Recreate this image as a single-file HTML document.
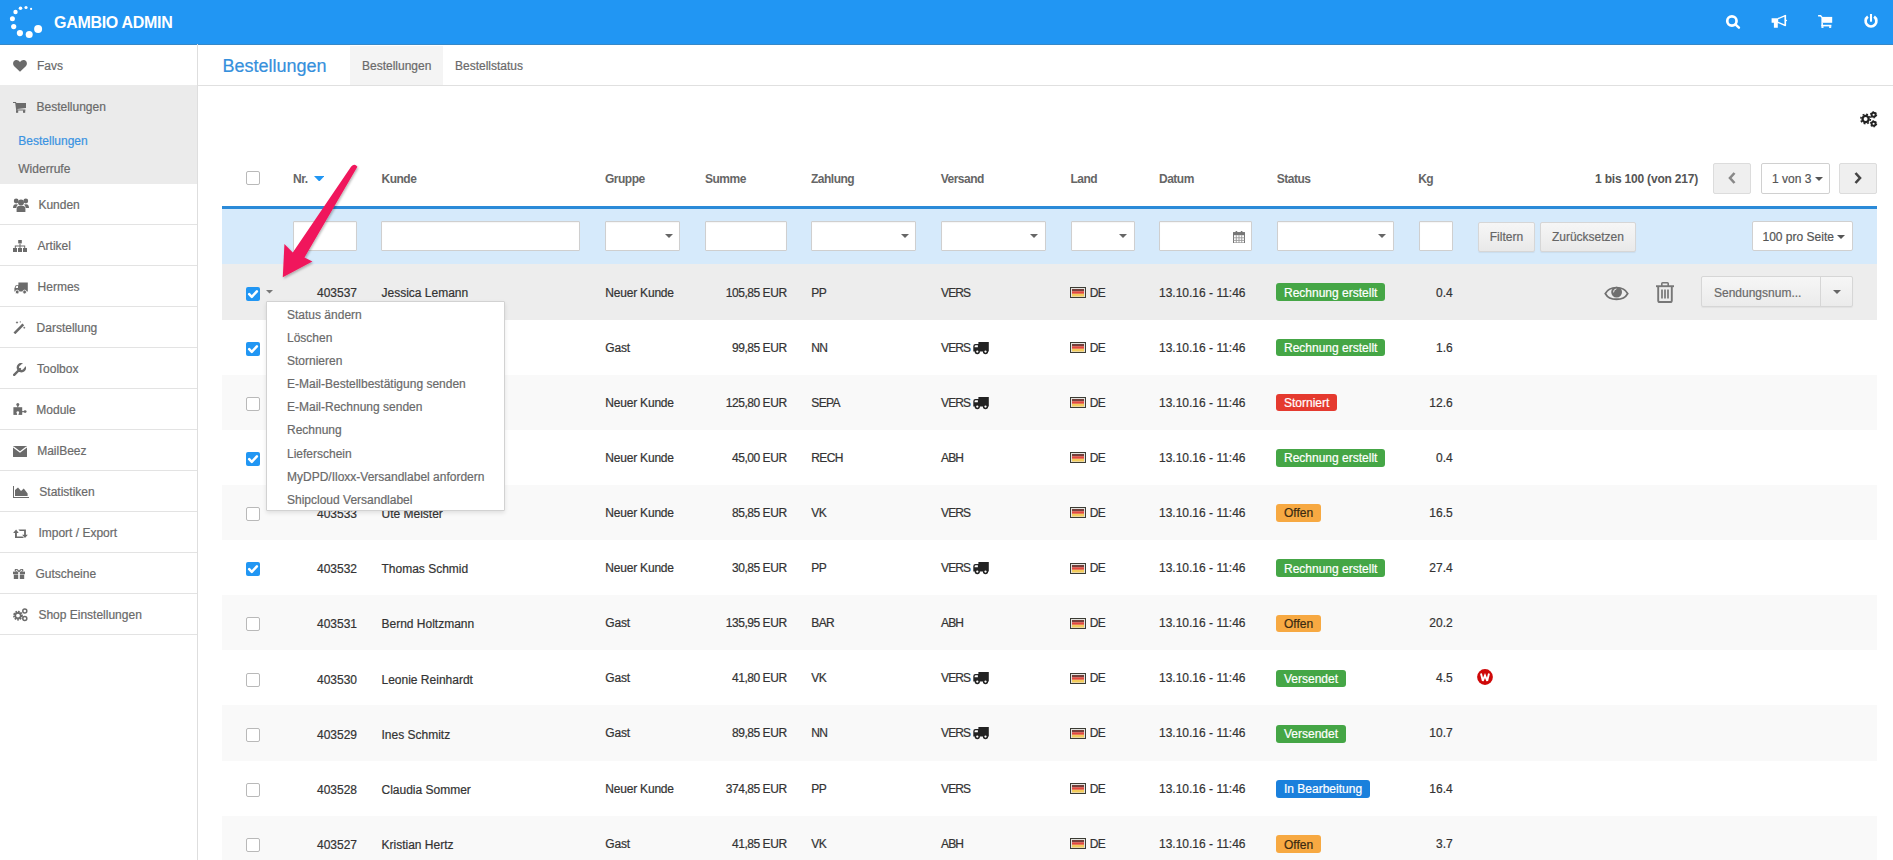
<!DOCTYPE html>
<html><head><meta charset="utf-8"><style>
html,body{margin:0;padding:0;width:1893px;height:860px;overflow:hidden;background:#fff;}
body{position:relative;font-family:"Liberation Sans", sans-serif;}
.t{position:absolute;white-space:nowrap;-webkit-text-stroke:0.2px currentColor;}
</style></head><body>
<div style="position:absolute;left:0.00px;top:0.00px;width:1893.00px;height:44.00px;background:#2196f3;"></div>
<div style="position:absolute;left:0.00px;top:44.00px;width:1893.00px;height:1.00px;background:#3688c8;"></div>
<svg style="position:absolute;left:0.00px;top:0.00px;" width="50" height="44" viewBox="0 0 50 44"><circle cx="31.1" cy="8.9" r="1.1" fill="#fff"/><circle cx="26" cy="7.5" r="1.6" fill="#fff"/><circle cx="20.5" cy="8.2" r="1.8" fill="#fff"/><circle cx="15.5" cy="12" r="2.2" fill="#fff"/><circle cx="12.4" cy="18.7" r="2.5" fill="#fff"/><circle cx="13.7" cy="26.6" r="2.6" fill="#fff"/><circle cx="19.9" cy="33.1" r="3.1" fill="#fff"/><circle cx="29.2" cy="34.4" r="3.5" fill="#fff"/><circle cx="38.1" cy="28.9" r="4" fill="#fff"/></svg>
<div class="t" style="left:54.00px;top:14.86px;font-size:16px;line-height:16px;font-weight:700;color:#fff;-webkit-text-stroke:0;letter-spacing:-0.3px;">GAMBIO ADMIN</div>
<svg style="position:absolute;left:1720.00px;top:10.00px;" width="26" height="22" viewBox="0 0 26 22"><circle cx="11.9" cy="11" r="4.65" fill="none" stroke="#fff" stroke-width="2.7"/><line x1="15.4" y1="14.4" x2="18.9" y2="17.7" stroke="#fff" stroke-width="2.5" stroke-linecap="round"/></svg>
<svg style="position:absolute;left:1766.00px;top:10.00px;" width="26" height="22" viewBox="0 0 26 22"><path d="M5.6 8.2 H12.2 V12.8 H11.8 V17.7 H7.9 V12.8 H5.6 Z" fill="#fff"/><path d="M12 8.7 L19.3 5.6 V15.5 L12 12.3" fill="none" stroke="#fff" stroke-width="1.4" stroke-linejoin="round"/><rect x="18.7" y="5" width="1.4" height="11" rx="0.6" fill="#fff"/><circle cx="20.3" cy="10.5" r="0.8" fill="#fff"/></svg>
<svg style="position:absolute;left:1814.00px;top:10.00px;" width="26" height="22" viewBox="0 0 26 22"><path d="M4.1 5.7 H6.6 L7.9 7.4" fill="none" stroke="#fff" stroke-width="1.5"/><rect x="7.4" y="6.9" width="10.8" height="5.9" fill="#fff"/><rect x="7.4" y="12.6" width="1.5" height="3.6" fill="#fff"/><rect x="7.4" y="14.8" width="10" height="1.6" fill="#fff"/><rect x="7.4" y="16.2" width="2.1" height="1.7" fill="#fff"/><rect x="15.1" y="16.2" width="2.1" height="1.7" fill="#fff"/></svg>
<svg style="position:absolute;left:1858.00px;top:8.00px;" width="26" height="24" viewBox="0 0 26 24"><path d="M16.1 8.68 A5.4 5.4 0 1 1 9.9 8.68" fill="none" stroke="#fff" stroke-width="2.7"/><line x1="13" y1="6" x2="13" y2="13.7" stroke="#fff" stroke-width="2.1"/></svg>
<div style="position:absolute;left:197.00px;top:44.00px;width:1.00px;height:816.00px;background:#dedede;"></div>
<div style="position:absolute;left:0.00px;top:84.50px;width:197.00px;height:1.00px;background:#e3e3e3;"></div>
<div class="t" style="left:37.00px;top:60.04px;font-size:12px;line-height:12px;font-weight:400;color:#6a6a6a;">Favs</div>
<svg style="position:absolute;left:13.00px;top:60.00px;" width="14" height="12" viewBox="0 0 14 12"><path d="M7 11.8 L1.2 6.2 C-0.6 4.3 -0.2 1.2 2.2 0.3 C4 -0.3 5.8 0.4 7 2.1 C8.2 0.4 10 -0.3 11.8 0.3 C14.2 1.2 14.6 4.3 12.8 6.2 Z" fill="#6b6b6b"/></svg>
<div style="position:absolute;left:0.00px;top:85.00px;width:197.00px;height:99.00px;background:#ebebeb;"></div>
<div class="t" style="left:36.50px;top:101.24px;font-size:12px;line-height:12px;font-weight:400;color:#6a6a6a;">Bestellungen</div>
<svg style="position:absolute;left:13.00px;top:102.00px;" width="13" height="11" viewBox="0 0 13 11"><path d="M0 0 H3 L3.3 1 H13 V6 L4.4 6.9 L4.6 7.6 H12.4 V8.4 H3.2 L2.2 1.1 H0 Z" fill="#6b6b6b"/><rect x="3" y="8.2" width="2.2" height="2.6" fill="#6b6b6b"/><rect x="10" y="8.2" width="2.2" height="2.6" fill="#6b6b6b"/></svg>
<div class="t" style="left:18.30px;top:134.84px;font-size:12px;line-height:12px;font-weight:400;color:#3a93e2;">Bestellungen</div>
<div class="t" style="left:18.30px;top:163.24px;font-size:12px;line-height:12px;font-weight:400;color:#6a6a6a;">Widerrufe</div>
<div class="t" style="left:38.40px;top:199.44px;font-size:12px;line-height:12px;font-weight:400;color:#6a6a6a;">Kunden</div>
<div style="position:absolute;left:0.00px;top:223.50px;width:197.00px;height:1.00px;background:#e3e3e3;"></div>
<svg style="position:absolute;left:13.00px;top:197.50px;" width="16" height="14" viewBox="0 0 16 14"><circle cx="3.2" cy="3" r="2.4" fill="#6b6b6b"/><circle cx="12.8" cy="3" r="2.4" fill="#6b6b6b"/><circle cx="8" cy="4.6" r="3" fill="#6b6b6b"/><path d="M0 10 Q0 6 3 6.2 L5 6.4 Q3.2 8 3.4 10 Z M16 10 Q16 6 13 6.2 L11 6.4 Q12.8 8 12.6 10 Z" fill="#6b6b6b"/><path d="M3.6 14 V11.2 Q3.6 7.8 7 7.8 H9 Q12.4 7.8 12.4 11.2 V14 Z" fill="#6b6b6b"/></svg>
<div class="t" style="left:37.60px;top:240.44px;font-size:12px;line-height:12px;font-weight:400;color:#6a6a6a;">Artikel</div>
<div style="position:absolute;left:0.00px;top:264.50px;width:197.00px;height:1.00px;background:#e3e3e3;"></div>
<svg style="position:absolute;left:13.00px;top:240.00px;" width="14" height="12" viewBox="0 0 14 12"><rect x="5.2" y="0" width="3.6" height="3.4" fill="#6b6b6b"/><path d="M6.5 3.4 H7.5 V5.4 H12.2 V8 H11.2 V6.4 H7.5 V8 H6.5 V6.4 H2.8 V8 H1.8 V5.4 H6.5 Z" fill="#6b6b6b"/><rect x="0" y="8" width="4" height="4" fill="#6b6b6b"/><rect x="5" y="8" width="4" height="4" fill="#6b6b6b"/><rect x="10" y="8" width="4" height="4" fill="#6b6b6b"/></svg>
<div class="t" style="left:37.60px;top:281.44px;font-size:12px;line-height:12px;font-weight:400;color:#6a6a6a;">Hermes</div>
<div style="position:absolute;left:0.00px;top:305.50px;width:197.00px;height:1.00px;background:#e3e3e3;"></div>
<svg style="position:absolute;left:13.50px;top:281.50px;" width="14" height="12" viewBox="0 0 14 12"><path d="M4.4 0.5 H13.8 V9.6 H0.4 V6.2 L1.8 3.2 H4.4 Z" fill="#6b6b6b"/><path d="M1.6 6 L2.4 4 H4 V6 Z" fill="#fff"/><circle cx="3.2" cy="10" r="1.9" fill="#6b6b6b" stroke="#fff" stroke-width="0.8"/><circle cx="10.6" cy="10" r="1.9" fill="#6b6b6b" stroke="#fff" stroke-width="0.8"/></svg>
<div class="t" style="left:36.60px;top:322.44px;font-size:12px;line-height:12px;font-weight:400;color:#6a6a6a;">Darstellung</div>
<div style="position:absolute;left:0.00px;top:346.50px;width:197.00px;height:1.00px;background:#e3e3e3;"></div>
<svg style="position:absolute;left:13.00px;top:321.00px;" width="13" height="13" viewBox="0 0 13 13"><path d="M0.5 11.4 L9.4 2.5 L11.2 4.3 L2.3 13.2 Z" fill="#6b6b6b"/><path d="M4 0.4 V2.6 M2.9 1.5 H5.1 M7.3 0.2 V1.6 M11.3 5.8 V7.6 M10.4 6.7 H12.2" stroke="#6b6b6b" stroke-width="0.8"/></svg>
<div class="t" style="left:37.10px;top:363.44px;font-size:12px;line-height:12px;font-weight:400;color:#6a6a6a;">Toolbox</div>
<div style="position:absolute;left:0.00px;top:387.50px;width:197.00px;height:1.00px;background:#e3e3e3;"></div>
<svg style="position:absolute;left:13.00px;top:363.00px;" width="13" height="13" viewBox="0 0 13 13"><path d="M1.2 11.8 L7 6 M8.5 1 A3.6 3.6 0 1 0 12 4.5" fill="none" stroke="#6b6b6b" stroke-width="2.4" stroke-linecap="round"/><path d="M7.2 2.8 L9.2 0.6 L12.4 3.8 L10.2 5.8 Z" fill="#fff"/></svg>
<div class="t" style="left:36.30px;top:404.44px;font-size:12px;line-height:12px;font-weight:400;color:#6a6a6a;">Module</div>
<div style="position:absolute;left:0.00px;top:428.50px;width:197.00px;height:1.00px;background:#e3e3e3;"></div>
<svg style="position:absolute;left:12.70px;top:402.80px;" width="14" height="12" viewBox="0 0 14 12"><rect x="0.4" y="4.2" width="8.8" height="7.7" fill="#6b6b6b"/><circle cx="4.8" cy="1.5" r="1.5" fill="#6b6b6b"/><rect x="4.2" y="2" width="1.2" height="2.4" fill="#6b6b6b"/><circle cx="12.1" cy="8.6" r="1.45" fill="#6b6b6b"/><rect x="9" y="8.1" width="2" height="1.1" fill="#6b6b6b"/><circle cx="4.8" cy="9.6" r="1.3" fill="#fff"/><rect x="4.1" y="9.6" width="1.4" height="2.4" fill="#fff"/></svg>
<div class="t" style="left:37.20px;top:445.44px;font-size:12px;line-height:12px;font-weight:400;color:#6a6a6a;">MailBeez</div>
<div style="position:absolute;left:0.00px;top:469.50px;width:197.00px;height:1.00px;background:#e3e3e3;"></div>
<svg style="position:absolute;left:12.70px;top:446.00px;" width="14" height="11" viewBox="0 0 14 11"><rect x="0" y="0" width="14" height="11" rx="0.6" fill="#6b6b6b"/><path d="M0.2 0.8 L7 6 L13.8 0.8" fill="none" stroke="#fff" stroke-width="1.2"/></svg>
<div class="t" style="left:39.30px;top:486.44px;font-size:12px;line-height:12px;font-weight:400;color:#6a6a6a;">Statistiken</div>
<div style="position:absolute;left:0.00px;top:510.50px;width:197.00px;height:1.00px;background:#e3e3e3;"></div>
<svg style="position:absolute;left:13.00px;top:486.00px;" width="16" height="12" viewBox="0 0 16 12"><path d="M0 0 H1 V11 H16 V12 H0 Z" fill="#6b6b6b"/><path d="M2 10 V4 L5 1.5 L8 5 L10.8 2.6 L14.6 7.4 V10 Z" fill="#6b6b6b"/></svg>
<div class="t" style="left:38.40px;top:527.44px;font-size:12px;line-height:12px;font-weight:400;color:#6a6a6a;">Import / Export</div>
<div style="position:absolute;left:0.00px;top:551.50px;width:197.00px;height:1.00px;background:#e3e3e3;"></div>
<svg style="position:absolute;left:13.00px;top:528.50px;" width="15" height="10" viewBox="0 0 15 10"><path d="M3.1 0.6 L5.7 3.9 H3.9 V7.6 H9.6 L11 9.1 H2 V3.9 H0.1 Z" fill="#6b6b6b"/><path d="M5.4 0.6 H12.9 V5.8 H14.8 L12 9.1 L9.1 5.8 H11.1 V2.1 H6.8 Z" fill="#6b6b6b"/></svg>
<div class="t" style="left:35.40px;top:568.44px;font-size:12px;line-height:12px;font-weight:400;color:#6a6a6a;">Gutscheine</div>
<div style="position:absolute;left:0.00px;top:592.50px;width:197.00px;height:1.00px;background:#e3e3e3;"></div>
<svg style="position:absolute;left:13.00px;top:568.50px;" width="12" height="10.5" viewBox="0 0 12 10.5"><rect x="0" y="2.6" width="12" height="2.6" fill="#6b6b6b"/><rect x="0.8" y="5.6" width="10.4" height="4.9" fill="#6b6b6b"/><rect x="5.2" y="2.6" width="1.6" height="7.9" fill="#fff"/><path d="M6 2.6 Q3.6 -0.6 2.4 0.6 Q1.6 1.8 3.6 2.6 M6 2.6 Q8.4 -0.6 9.6 0.6 Q10.4 1.8 8.4 2.6" fill="none" stroke="#6b6b6b" stroke-width="1.1"/></svg>
<div class="t" style="left:38.40px;top:609.44px;font-size:12px;line-height:12px;font-weight:400;color:#6a6a6a;">Shop Einstellungen</div>
<div style="position:absolute;left:0.00px;top:633.50px;width:197.00px;height:1.00px;background:#e3e3e3;"></div>
<svg style="position:absolute;left:13.00px;top:608.30px;" width="15" height="13.3" viewBox="0 0 15 13.3"><circle cx="5" cy="7.6" r="3.6" fill="none" stroke="#6b6b6b" stroke-width="2.6" stroke-dasharray="1.6 0.75"/><circle cx="5" cy="7.6" r="2.7" fill="none" stroke="#6b6b6b" stroke-width="1.6"/><circle cx="11.8" cy="3" r="2" fill="none" stroke="#6b6b6b" stroke-width="1.5"/><circle cx="11.8" cy="10.4" r="2" fill="none" stroke="#6b6b6b" stroke-width="1.5"/></svg>
<div style="position:absolute;left:198.00px;top:84.50px;width:1695.00px;height:1.00px;background:#e0e0e0;"></div>
<div class="t" style="left:222.50px;top:56.76px;font-size:18px;line-height:18px;font-weight:400;color:#3590dc;">Bestellungen</div>
<div style="position:absolute;left:350.00px;top:46.00px;width:93.00px;height:38.50px;background:#f4f4f4;"></div>
<div class="t" style="left:362.00px;top:60.14px;font-size:12px;line-height:12px;font-weight:400;color:#6a6a6a;">Bestellungen</div>
<div class="t" style="left:455.00px;top:60.14px;font-size:12px;line-height:12px;font-weight:400;color:#6a6a6a;">Bestellstatus</div>
<svg style="position:absolute;left:1855.00px;top:106.00px;" width="26" height="26" viewBox="0 0 26 26"><g fill="none" stroke="#222"><circle cx="10.6" cy="13" r="3.1" stroke-width="2.3"/><circle cx="10.6" cy="13" r="4.8" stroke-width="1.5" stroke-dasharray="1.9 1.87"/><circle cx="18.6" cy="8.8" r="2" stroke-width="1.9"/><circle cx="18.6" cy="8.8" r="3.1" stroke-width="1.1" stroke-dasharray="1.5 1.75"/><circle cx="18.6" cy="17.8" r="2" stroke-width="1.9"/><circle cx="18.6" cy="17.8" r="3.1" stroke-width="1.1" stroke-dasharray="1.5 1.75"/></g></svg>
<div style="position:absolute;left:246.00px;top:171.00px;width:14.00px;height:14.00px;box-sizing:border-box;border:1px solid #b9b9b9;border-radius:2px;background:#fff;"></div>
<div class="t" style="left:293.00px;top:172.84px;font-size:12px;line-height:12px;font-weight:700;color:#666;-webkit-text-stroke:0;letter-spacing:-0.4px;">Nr.</div>
<svg style="position:absolute;left:313.50px;top:175.80px;" width="10.5" height="5.5" viewBox="0 0 10.5 5.5"><path d="M0 0 H10.5 L5.25 5.5 Z" fill="#2196f3"/></svg>
<div class="t" style="left:381.50px;top:172.84px;font-size:12px;line-height:12px;font-weight:700;color:#666;-webkit-text-stroke:0;letter-spacing:-0.5px;">Kunde</div>
<div class="t" style="left:605.00px;top:172.84px;font-size:12px;line-height:12px;font-weight:700;color:#666;-webkit-text-stroke:0;letter-spacing:-0.5px;">Gruppe</div>
<div class="t" style="left:705.00px;top:172.84px;font-size:12px;line-height:12px;font-weight:700;color:#666;-webkit-text-stroke:0;letter-spacing:-0.5px;">Summe</div>
<div class="t" style="left:811.00px;top:172.84px;font-size:12px;line-height:12px;font-weight:700;color:#666;-webkit-text-stroke:0;letter-spacing:-0.5px;">Zahlung</div>
<div class="t" style="left:940.70px;top:172.84px;font-size:12px;line-height:12px;font-weight:700;color:#666;-webkit-text-stroke:0;letter-spacing:-0.5px;">Versand</div>
<div class="t" style="left:1070.50px;top:172.84px;font-size:12px;line-height:12px;font-weight:700;color:#666;-webkit-text-stroke:0;letter-spacing:-0.5px;">Land</div>
<div class="t" style="left:1159.00px;top:172.84px;font-size:12px;line-height:12px;font-weight:700;color:#666;-webkit-text-stroke:0;letter-spacing:-0.5px;">Datum</div>
<div class="t" style="left:1276.80px;top:172.84px;font-size:12px;line-height:12px;font-weight:700;color:#666;-webkit-text-stroke:0;letter-spacing:-0.5px;">Status</div>
<div class="t" style="left:1418.20px;top:172.84px;font-size:12px;line-height:12px;font-weight:700;color:#666;-webkit-text-stroke:0;letter-spacing:-0.5px;">Kg</div>
<div class="t" style="right:195.00px;top:173.34px;font-size:12px;line-height:12px;font-weight:700;color:#555;-webkit-text-stroke:0;letter-spacing:-0.2px;">1 bis 100 (von 217)</div>
<div style="position:absolute;left:1713.00px;top:163.00px;width:37.70px;height:31.00px;box-sizing:border-box;border:1px solid #dcdcdc;border-radius:2px;background:#efefef;"></div>
<svg style="position:absolute;left:1727.50px;top:172.00px;" width="8" height="12" viewBox="0 0 8 12"><path d="M6.5 1 L2 6 L6.5 11" fill="none" stroke="#888" stroke-width="2.6"/></svg>
<div style="position:absolute;left:1760.50px;top:163.00px;width:69.20px;height:31.00px;box-sizing:border-box;border:1px solid #d0d0d0;border-radius:2px;background:#fff;"></div>
<div class="t" style="left:1772.00px;top:172.84px;font-size:12px;line-height:12px;font-weight:400;color:#555;">1 von 3</div>
<svg style="position:absolute;left:1814.50px;top:176.80px;" width="8" height="4" viewBox="0 0 8 4"><path d="M0 0 H8 L4.0 4 Z" fill="#555"/></svg>
<div style="position:absolute;left:1839.00px;top:163.00px;width:37.60px;height:31.00px;box-sizing:border-box;border:1px solid #dcdcdc;border-radius:2px;background:#efefef;"></div>
<svg style="position:absolute;left:1854.00px;top:172.00px;" width="8" height="12" viewBox="0 0 8 12"><path d="M1.5 1 L6 6 L1.5 11" fill="none" stroke="#444" stroke-width="2.6"/></svg>
<div style="position:absolute;left:222.00px;top:206.00px;width:1654.60px;height:3.00px;background:#2b8ad8;"></div>
<div style="position:absolute;left:222.00px;top:209.00px;width:1654.60px;height:55.40px;background:#d6eafb;"></div>
<div style="position:absolute;left:293.00px;top:221.30px;width:64.00px;height:30.10px;box-sizing:border-box;border:1px solid #cfcfcf;border-radius:1px;background:#fff;box-shadow:inset 0 1px 1px rgba(0,0,0,.04);"></div>
<div style="position:absolute;left:381.30px;top:221.30px;width:199.00px;height:30.10px;box-sizing:border-box;border:1px solid #cfcfcf;border-radius:1px;background:#fff;box-shadow:inset 0 1px 1px rgba(0,0,0,.04);"></div>
<div style="position:absolute;left:605.30px;top:221.30px;width:75.20px;height:30.10px;box-sizing:border-box;border:1px solid #cfcfcf;border-radius:1px;background:#fff;box-shadow:inset 0 1px 1px rgba(0,0,0,.04);"></div>
<svg style="position:absolute;left:664.50px;top:234.20px;" width="8" height="4" viewBox="0 0 8 4"><path d="M0 0 H8 L4.0 4 Z" fill="#666"/></svg>
<div style="position:absolute;left:705.30px;top:221.30px;width:81.30px;height:30.10px;box-sizing:border-box;border:1px solid #cfcfcf;border-radius:1px;background:#fff;box-shadow:inset 0 1px 1px rgba(0,0,0,.04);"></div>
<div style="position:absolute;left:811.30px;top:221.30px;width:105.20px;height:30.10px;box-sizing:border-box;border:1px solid #cfcfcf;border-radius:1px;background:#fff;box-shadow:inset 0 1px 1px rgba(0,0,0,.04);"></div>
<svg style="position:absolute;left:900.50px;top:234.20px;" width="8" height="4" viewBox="0 0 8 4"><path d="M0 0 H8 L4.0 4 Z" fill="#666"/></svg>
<div style="position:absolute;left:941.30px;top:221.30px;width:104.40px;height:30.10px;box-sizing:border-box;border:1px solid #cfcfcf;border-radius:1px;background:#fff;box-shadow:inset 0 1px 1px rgba(0,0,0,.04);"></div>
<svg style="position:absolute;left:1029.70px;top:234.20px;" width="8" height="4" viewBox="0 0 8 4"><path d="M0 0 H8 L4.0 4 Z" fill="#666"/></svg>
<div style="position:absolute;left:1070.50px;top:221.30px;width:64.00px;height:30.10px;box-sizing:border-box;border:1px solid #cfcfcf;border-radius:1px;background:#fff;box-shadow:inset 0 1px 1px rgba(0,0,0,.04);"></div>
<svg style="position:absolute;left:1118.50px;top:234.20px;" width="8" height="4" viewBox="0 0 8 4"><path d="M0 0 H8 L4.0 4 Z" fill="#666"/></svg>
<div style="position:absolute;left:1159.00px;top:221.30px;width:92.60px;height:30.10px;box-sizing:border-box;border:1px solid #cfcfcf;border-radius:1px;background:#fff;box-shadow:inset 0 1px 1px rgba(0,0,0,.04);"></div>
<div style="position:absolute;left:1276.60px;top:221.30px;width:117.00px;height:30.10px;box-sizing:border-box;border:1px solid #cfcfcf;border-radius:1px;background:#fff;box-shadow:inset 0 1px 1px rgba(0,0,0,.04);"></div>
<svg style="position:absolute;left:1377.60px;top:234.20px;" width="8" height="4" viewBox="0 0 8 4"><path d="M0 0 H8 L4.0 4 Z" fill="#666"/></svg>
<div style="position:absolute;left:1418.60px;top:221.30px;width:34.10px;height:30.10px;box-sizing:border-box;border:1px solid #cfcfcf;border-radius:1px;background:#fff;box-shadow:inset 0 1px 1px rgba(0,0,0,.04);"></div>
<svg style="position:absolute;left:1233.00px;top:230.50px;" width="12" height="12.5" viewBox="0 0 12 12.5"><rect x="0.5" y="1.6" width="11" height="10.4" fill="none" stroke="#777" stroke-width="1"/><rect x="0.5" y="1.6" width="11" height="2.6" fill="#777"/><rect x="2.6" y="0" width="1.6" height="2.8" fill="#777"/><rect x="7.8" y="0" width="1.6" height="2.8" fill="#777"/><path d="M3.3 4.2 V12 M6 4.2 V12 M8.7 4.2 V12 M0.5 6.8 H11.5 M0.5 9.4 H11.5" stroke="#999" stroke-width="0.9"/></svg>
<div style="position:absolute;left:1477.60px;top:221.60px;width:57.70px;height:30.40px;box-sizing:border-box;border:1px solid #d6d6d6;border-radius:2px;background:linear-gradient(#f6f6f6,#e9e9e9);box-shadow:0 1px 1px rgba(0,0,0,.06);"></div>
<div class="t" style="left:1206.45px;width:600px;text-align:center;top:230.94px;font-size:12px;line-height:12px;font-weight:400;color:#666;">Filtern</div>
<div style="position:absolute;left:1539.50px;top:221.60px;width:96.80px;height:30.40px;box-sizing:border-box;border:1px solid #d6d6d6;border-radius:2px;background:linear-gradient(#f6f6f6,#e9e9e9);box-shadow:0 1px 1px rgba(0,0,0,.06);"></div>
<div class="t" style="left:1287.90px;width:600px;text-align:center;top:230.94px;font-size:12px;line-height:12px;font-weight:400;color:#666;">Zurücksetzen</div>
<div style="position:absolute;left:1752.00px;top:221.30px;width:100.60px;height:30.20px;box-sizing:border-box;border:1px solid #d0d0d0;border-radius:2px;background:#fff;"></div>
<div class="t" style="left:1762.50px;top:231.14px;font-size:12px;line-height:12px;font-weight:400;color:#555;">100 pro Seite</div>
<svg style="position:absolute;left:1837.20px;top:234.70px;" width="8" height="4" viewBox="0 0 8 4"><path d="M0 0 H8 L4.0 4 Z" fill="#555"/></svg>
<div style="position:absolute;left:222.00px;top:264.40px;width:1654.60px;height:55.12px;background:#ededed;"></div>
<svg style="position:absolute;left:246.00px;top:286.70px;" width="14" height="14" viewBox="0 0 14 14"><rect x="0" y="0" width="14" height="14" rx="2" fill="#2196f3"/><path d="M3.2 7.2 L5.8 9.8 L10.9 4.3" fill="none" stroke="#fff" stroke-width="2.5" stroke-linecap="round" stroke-linejoin="round"/></svg>
<div class="t" style="right:1536.00px;top:287.04px;font-size:12px;line-height:12px;font-weight:400;color:#333;">403537</div>
<div class="t" style="left:381.50px;top:287.04px;font-size:12px;line-height:12px;font-weight:400;color:#333;">Jessica Lemann</div>
<div class="t" style="left:605.30px;top:286.64px;font-size:12px;line-height:12px;font-weight:400;color:#333;letter-spacing:-0.2px;">Neuer Kunde</div>
<div class="t" style="right:1106.40px;top:286.64px;font-size:12px;line-height:12px;font-weight:400;color:#333;letter-spacing:-0.45px;">105,85 EUR</div>
<div class="t" style="left:811.30px;top:286.64px;font-size:12px;line-height:12px;font-weight:400;color:#333;letter-spacing:-0.6px;">PP</div>
<div class="t" style="left:941.00px;top:286.64px;font-size:12px;line-height:12px;font-weight:400;color:#333;letter-spacing:-0.85px;">VERS</div>
<svg style="position:absolute;left:1070.00px;top:287.00px;" width="16" height="11" viewBox="0 0 16 11"><rect x="0.5" y="0.5" width="15" height="10" fill="#e4e4e0" stroke="#3c3c34" stroke-width="1"/><rect x="2" y="2" width="12" height="2.3" fill="#74403c"/><rect x="2" y="4.3" width="12" height="2.5" fill="#e3483e"/><rect x="2" y="6.8" width="12" height="2.7" fill="#f3cc5c"/></svg>
<div class="t" style="left:1089.80px;top:286.64px;font-size:12px;line-height:12px;font-weight:400;color:#333;letter-spacing:-0.6px;">DE</div>
<div class="t" style="left:1159.00px;top:286.64px;font-size:12px;line-height:12px;font-weight:400;color:#333;">13.10.16 - 11:46</div>
<div class="t" style="left:1276px;top:283.30px;height:17.8px;box-sizing:border-box;padding:2.4px 8px 0 8px;line-height:15.3px;border-radius:3px;background:#45a646;color:#fff;font-size:12px;">Rechnung erstellt</div>
<div class="t" style="right:440.30px;top:286.64px;font-size:12px;line-height:12px;font-weight:400;color:#333;">0.4</div>
<div style="position:absolute;left:222.00px;top:319.52px;width:1654.60px;height:55.12px;background:#fff;"></div>
<svg style="position:absolute;left:246.00px;top:341.82px;" width="14" height="14" viewBox="0 0 14 14"><rect x="0" y="0" width="14" height="14" rx="2" fill="#2196f3"/><path d="M3.2 7.2 L5.8 9.8 L10.9 4.3" fill="none" stroke="#fff" stroke-width="2.5" stroke-linecap="round" stroke-linejoin="round"/></svg>
<div class="t" style="right:1536.00px;top:342.27px;font-size:12px;line-height:12px;font-weight:400;color:#333;">403536</div>
<div class="t" style="left:381.50px;top:342.27px;font-size:12px;line-height:12px;font-weight:400;color:#333;">Susanne Bauer</div>
<div class="t" style="left:605.30px;top:341.74px;font-size:12px;line-height:12px;font-weight:400;color:#333;letter-spacing:-0.2px;">Gast</div>
<div class="t" style="right:1106.40px;top:341.74px;font-size:12px;line-height:12px;font-weight:400;color:#333;letter-spacing:-0.45px;">99,85 EUR</div>
<div class="t" style="left:811.30px;top:341.74px;font-size:12px;line-height:12px;font-weight:400;color:#333;letter-spacing:-0.6px;">NN</div>
<div class="t" style="left:941.00px;top:341.74px;font-size:12px;line-height:12px;font-weight:400;color:#333;letter-spacing:-0.85px;">VERS</div>
<svg style="position:absolute;left:970.00px;top:338.60px;" width="22" height="18" viewBox="0 0 22 18"><path d="M8.4 2.9 H18.8 V12.4 H3.3 V7.2 Q3.3 5 5.4 5 H8.4 Z" fill="#222"/><path d="M4.6 8.3 V7.4 Q4.6 6.2 5.8 6.2 H7.9 V8.3 Z" fill="#fff"/><circle cx="7.3" cy="12.6" r="1.9" fill="#fff" stroke="#222" stroke-width="1.5"/><circle cx="15.5" cy="12.6" r="1.9" fill="#fff" stroke="#222" stroke-width="1.5"/></svg>
<svg style="position:absolute;left:1070.00px;top:342.10px;" width="16" height="11" viewBox="0 0 16 11"><rect x="0.5" y="0.5" width="15" height="10" fill="#e4e4e0" stroke="#3c3c34" stroke-width="1"/><rect x="2" y="2" width="12" height="2.3" fill="#74403c"/><rect x="2" y="4.3" width="12" height="2.5" fill="#e3483e"/><rect x="2" y="6.8" width="12" height="2.7" fill="#f3cc5c"/></svg>
<div class="t" style="left:1089.80px;top:341.74px;font-size:12px;line-height:12px;font-weight:400;color:#333;letter-spacing:-0.6px;">DE</div>
<div class="t" style="left:1159.00px;top:341.74px;font-size:12px;line-height:12px;font-weight:400;color:#333;">13.10.16 - 11:46</div>
<div class="t" style="left:1276px;top:338.50px;height:17.8px;box-sizing:border-box;padding:2.4px 8px 0 8px;line-height:15.3px;border-radius:3px;background:#45a646;color:#fff;font-size:12px;">Rechnung erstellt</div>
<div class="t" style="right:440.30px;top:341.74px;font-size:12px;line-height:12px;font-weight:400;color:#333;">1.6</div>
<div style="position:absolute;left:222.00px;top:374.65px;width:1654.60px;height:55.12px;background:#f9f9f9;"></div>
<div style="position:absolute;left:246.00px;top:396.95px;width:14.00px;height:14.00px;box-sizing:border-box;border:1px solid #b9b9b9;border-radius:2px;background:#fff;"></div>
<div class="t" style="right:1536.00px;top:397.49px;font-size:12px;line-height:12px;font-weight:400;color:#333;">403535</div>
<div class="t" style="left:381.50px;top:397.49px;font-size:12px;line-height:12px;font-weight:400;color:#333;">Martin Keller</div>
<div class="t" style="left:605.30px;top:396.84px;font-size:12px;line-height:12px;font-weight:400;color:#333;letter-spacing:-0.2px;">Neuer Kunde</div>
<div class="t" style="right:1106.40px;top:396.84px;font-size:12px;line-height:12px;font-weight:400;color:#333;letter-spacing:-0.45px;">125,80 EUR</div>
<div class="t" style="left:811.30px;top:396.84px;font-size:12px;line-height:12px;font-weight:400;color:#333;letter-spacing:-0.6px;">SEPA</div>
<div class="t" style="left:941.00px;top:396.84px;font-size:12px;line-height:12px;font-weight:400;color:#333;letter-spacing:-0.85px;">VERS</div>
<svg style="position:absolute;left:970.00px;top:393.70px;" width="22" height="18" viewBox="0 0 22 18"><path d="M8.4 2.9 H18.8 V12.4 H3.3 V7.2 Q3.3 5 5.4 5 H8.4 Z" fill="#222"/><path d="M4.6 8.3 V7.4 Q4.6 6.2 5.8 6.2 H7.9 V8.3 Z" fill="#fff"/><circle cx="7.3" cy="12.6" r="1.9" fill="#fff" stroke="#222" stroke-width="1.5"/><circle cx="15.5" cy="12.6" r="1.9" fill="#fff" stroke="#222" stroke-width="1.5"/></svg>
<svg style="position:absolute;left:1070.00px;top:397.20px;" width="16" height="11" viewBox="0 0 16 11"><rect x="0.5" y="0.5" width="15" height="10" fill="#e4e4e0" stroke="#3c3c34" stroke-width="1"/><rect x="2" y="2" width="12" height="2.3" fill="#74403c"/><rect x="2" y="4.3" width="12" height="2.5" fill="#e3483e"/><rect x="2" y="6.8" width="12" height="2.7" fill="#f3cc5c"/></svg>
<div class="t" style="left:1089.80px;top:396.84px;font-size:12px;line-height:12px;font-weight:400;color:#333;letter-spacing:-0.6px;">DE</div>
<div class="t" style="left:1159.00px;top:396.84px;font-size:12px;line-height:12px;font-weight:400;color:#333;">13.10.16 - 11:46</div>
<div class="t" style="left:1276px;top:393.70px;height:17.8px;box-sizing:border-box;padding:2.4px 8px 0 8px;line-height:15.3px;border-radius:3px;background:#e53a2f;color:#fff;font-size:12px;">Storniert</div>
<div class="t" style="right:440.30px;top:396.84px;font-size:12px;line-height:12px;font-weight:400;color:#333;">12.6</div>
<div style="position:absolute;left:222.00px;top:429.77px;width:1654.60px;height:55.12px;background:#fff;"></div>
<svg style="position:absolute;left:246.00px;top:452.07px;" width="14" height="14" viewBox="0 0 14 14"><rect x="0" y="0" width="14" height="14" rx="2" fill="#2196f3"/><path d="M3.2 7.2 L5.8 9.8 L10.9 4.3" fill="none" stroke="#fff" stroke-width="2.5" stroke-linecap="round" stroke-linejoin="round"/></svg>
<div class="t" style="right:1536.00px;top:452.72px;font-size:12px;line-height:12px;font-weight:400;color:#333;">403534</div>
<div class="t" style="left:381.50px;top:452.72px;font-size:12px;line-height:12px;font-weight:400;color:#333;">Peter Wagner</div>
<div class="t" style="left:605.30px;top:451.94px;font-size:12px;line-height:12px;font-weight:400;color:#333;letter-spacing:-0.2px;">Neuer Kunde</div>
<div class="t" style="right:1106.40px;top:451.94px;font-size:12px;line-height:12px;font-weight:400;color:#333;letter-spacing:-0.45px;">45,00 EUR</div>
<div class="t" style="left:811.30px;top:451.94px;font-size:12px;line-height:12px;font-weight:400;color:#333;letter-spacing:-0.6px;">RECH</div>
<div class="t" style="left:941.00px;top:451.94px;font-size:12px;line-height:12px;font-weight:400;color:#333;letter-spacing:-0.85px;">ABH</div>
<svg style="position:absolute;left:1070.00px;top:452.30px;" width="16" height="11" viewBox="0 0 16 11"><rect x="0.5" y="0.5" width="15" height="10" fill="#e4e4e0" stroke="#3c3c34" stroke-width="1"/><rect x="2" y="2" width="12" height="2.3" fill="#74403c"/><rect x="2" y="4.3" width="12" height="2.5" fill="#e3483e"/><rect x="2" y="6.8" width="12" height="2.7" fill="#f3cc5c"/></svg>
<div class="t" style="left:1089.80px;top:451.94px;font-size:12px;line-height:12px;font-weight:400;color:#333;letter-spacing:-0.6px;">DE</div>
<div class="t" style="left:1159.00px;top:451.94px;font-size:12px;line-height:12px;font-weight:400;color:#333;">13.10.16 - 11:46</div>
<div class="t" style="left:1276px;top:448.90px;height:17.8px;box-sizing:border-box;padding:2.4px 8px 0 8px;line-height:15.3px;border-radius:3px;background:#45a646;color:#fff;font-size:12px;">Rechnung erstellt</div>
<div class="t" style="right:440.30px;top:451.94px;font-size:12px;line-height:12px;font-weight:400;color:#333;">0.4</div>
<div style="position:absolute;left:222.00px;top:484.90px;width:1654.60px;height:55.12px;background:#f9f9f9;"></div>
<div style="position:absolute;left:246.00px;top:507.20px;width:14.00px;height:14.00px;box-sizing:border-box;border:1px solid #b9b9b9;border-radius:2px;background:#fff;"></div>
<div class="t" style="right:1536.00px;top:507.94px;font-size:12px;line-height:12px;font-weight:400;color:#333;">403533</div>
<div class="t" style="left:381.50px;top:507.94px;font-size:12px;line-height:12px;font-weight:400;color:#333;">Ute Meister</div>
<div class="t" style="left:605.30px;top:507.04px;font-size:12px;line-height:12px;font-weight:400;color:#333;letter-spacing:-0.2px;">Neuer Kunde</div>
<div class="t" style="right:1106.40px;top:507.04px;font-size:12px;line-height:12px;font-weight:400;color:#333;letter-spacing:-0.45px;">85,85 EUR</div>
<div class="t" style="left:811.30px;top:507.04px;font-size:12px;line-height:12px;font-weight:400;color:#333;letter-spacing:-0.6px;">VK</div>
<div class="t" style="left:941.00px;top:507.04px;font-size:12px;line-height:12px;font-weight:400;color:#333;letter-spacing:-0.85px;">VERS</div>
<svg style="position:absolute;left:1070.00px;top:507.40px;" width="16" height="11" viewBox="0 0 16 11"><rect x="0.5" y="0.5" width="15" height="10" fill="#e4e4e0" stroke="#3c3c34" stroke-width="1"/><rect x="2" y="2" width="12" height="2.3" fill="#74403c"/><rect x="2" y="4.3" width="12" height="2.5" fill="#e3483e"/><rect x="2" y="6.8" width="12" height="2.7" fill="#f3cc5c"/></svg>
<div class="t" style="left:1089.80px;top:507.04px;font-size:12px;line-height:12px;font-weight:400;color:#333;letter-spacing:-0.6px;">DE</div>
<div class="t" style="left:1159.00px;top:507.04px;font-size:12px;line-height:12px;font-weight:400;color:#333;">13.10.16 - 11:46</div>
<div class="t" style="left:1276px;top:504.10px;height:17.8px;box-sizing:border-box;padding:2.4px 8px 0 8px;line-height:15.3px;border-radius:3px;background:#f7a942;color:#3a2a12;font-size:12px;">Offen</div>
<div class="t" style="right:440.30px;top:507.04px;font-size:12px;line-height:12px;font-weight:400;color:#333;">16.5</div>
<div style="position:absolute;left:222.00px;top:540.02px;width:1654.60px;height:55.12px;background:#fff;"></div>
<svg style="position:absolute;left:246.00px;top:562.32px;" width="14" height="14" viewBox="0 0 14 14"><rect x="0" y="0" width="14" height="14" rx="2" fill="#2196f3"/><path d="M3.2 7.2 L5.8 9.8 L10.9 4.3" fill="none" stroke="#fff" stroke-width="2.5" stroke-linecap="round" stroke-linejoin="round"/></svg>
<div class="t" style="right:1536.00px;top:563.17px;font-size:12px;line-height:12px;font-weight:400;color:#333;">403532</div>
<div class="t" style="left:381.50px;top:563.17px;font-size:12px;line-height:12px;font-weight:400;color:#333;">Thomas Schmid</div>
<div class="t" style="left:605.30px;top:562.14px;font-size:12px;line-height:12px;font-weight:400;color:#333;letter-spacing:-0.2px;">Neuer Kunde</div>
<div class="t" style="right:1106.40px;top:562.14px;font-size:12px;line-height:12px;font-weight:400;color:#333;letter-spacing:-0.45px;">30,85 EUR</div>
<div class="t" style="left:811.30px;top:562.14px;font-size:12px;line-height:12px;font-weight:400;color:#333;letter-spacing:-0.6px;">PP</div>
<div class="t" style="left:941.00px;top:562.14px;font-size:12px;line-height:12px;font-weight:400;color:#333;letter-spacing:-0.85px;">VERS</div>
<svg style="position:absolute;left:970.00px;top:559.00px;" width="22" height="18" viewBox="0 0 22 18"><path d="M8.4 2.9 H18.8 V12.4 H3.3 V7.2 Q3.3 5 5.4 5 H8.4 Z" fill="#222"/><path d="M4.6 8.3 V7.4 Q4.6 6.2 5.8 6.2 H7.9 V8.3 Z" fill="#fff"/><circle cx="7.3" cy="12.6" r="1.9" fill="#fff" stroke="#222" stroke-width="1.5"/><circle cx="15.5" cy="12.6" r="1.9" fill="#fff" stroke="#222" stroke-width="1.5"/></svg>
<svg style="position:absolute;left:1070.00px;top:562.50px;" width="16" height="11" viewBox="0 0 16 11"><rect x="0.5" y="0.5" width="15" height="10" fill="#e4e4e0" stroke="#3c3c34" stroke-width="1"/><rect x="2" y="2" width="12" height="2.3" fill="#74403c"/><rect x="2" y="4.3" width="12" height="2.5" fill="#e3483e"/><rect x="2" y="6.8" width="12" height="2.7" fill="#f3cc5c"/></svg>
<div class="t" style="left:1089.80px;top:562.14px;font-size:12px;line-height:12px;font-weight:400;color:#333;letter-spacing:-0.6px;">DE</div>
<div class="t" style="left:1159.00px;top:562.14px;font-size:12px;line-height:12px;font-weight:400;color:#333;">13.10.16 - 11:46</div>
<div class="t" style="left:1276px;top:559.30px;height:17.8px;box-sizing:border-box;padding:2.4px 8px 0 8px;line-height:15.3px;border-radius:3px;background:#45a646;color:#fff;font-size:12px;">Rechnung erstellt</div>
<div class="t" style="right:440.30px;top:562.14px;font-size:12px;line-height:12px;font-weight:400;color:#333;">27.4</div>
<div style="position:absolute;left:222.00px;top:595.15px;width:1654.60px;height:55.12px;background:#f9f9f9;"></div>
<div style="position:absolute;left:246.00px;top:617.45px;width:14.00px;height:14.00px;box-sizing:border-box;border:1px solid #b9b9b9;border-radius:2px;background:#fff;"></div>
<div class="t" style="right:1536.00px;top:618.39px;font-size:12px;line-height:12px;font-weight:400;color:#333;">403531</div>
<div class="t" style="left:381.50px;top:618.39px;font-size:12px;line-height:12px;font-weight:400;color:#333;">Bernd Holtzmann</div>
<div class="t" style="left:605.30px;top:617.24px;font-size:12px;line-height:12px;font-weight:400;color:#333;letter-spacing:-0.2px;">Gast</div>
<div class="t" style="right:1106.40px;top:617.24px;font-size:12px;line-height:12px;font-weight:400;color:#333;letter-spacing:-0.45px;">135,95 EUR</div>
<div class="t" style="left:811.30px;top:617.24px;font-size:12px;line-height:12px;font-weight:400;color:#333;letter-spacing:-0.6px;">BAR</div>
<div class="t" style="left:941.00px;top:617.24px;font-size:12px;line-height:12px;font-weight:400;color:#333;letter-spacing:-0.85px;">ABH</div>
<svg style="position:absolute;left:1070.00px;top:617.60px;" width="16" height="11" viewBox="0 0 16 11"><rect x="0.5" y="0.5" width="15" height="10" fill="#e4e4e0" stroke="#3c3c34" stroke-width="1"/><rect x="2" y="2" width="12" height="2.3" fill="#74403c"/><rect x="2" y="4.3" width="12" height="2.5" fill="#e3483e"/><rect x="2" y="6.8" width="12" height="2.7" fill="#f3cc5c"/></svg>
<div class="t" style="left:1089.80px;top:617.24px;font-size:12px;line-height:12px;font-weight:400;color:#333;letter-spacing:-0.6px;">DE</div>
<div class="t" style="left:1159.00px;top:617.24px;font-size:12px;line-height:12px;font-weight:400;color:#333;">13.10.16 - 11:46</div>
<div class="t" style="left:1276px;top:614.50px;height:17.8px;box-sizing:border-box;padding:2.4px 8px 0 8px;line-height:15.3px;border-radius:3px;background:#f7a942;color:#3a2a12;font-size:12px;">Offen</div>
<div class="t" style="right:440.30px;top:617.24px;font-size:12px;line-height:12px;font-weight:400;color:#333;">20.2</div>
<div style="position:absolute;left:222.00px;top:650.27px;width:1654.60px;height:55.12px;background:#fff;"></div>
<div style="position:absolute;left:246.00px;top:672.57px;width:14.00px;height:14.00px;box-sizing:border-box;border:1px solid #b9b9b9;border-radius:2px;background:#fff;"></div>
<div class="t" style="right:1536.00px;top:673.62px;font-size:12px;line-height:12px;font-weight:400;color:#333;">403530</div>
<div class="t" style="left:381.50px;top:673.62px;font-size:12px;line-height:12px;font-weight:400;color:#333;">Leonie Reinhardt</div>
<div class="t" style="left:605.30px;top:672.34px;font-size:12px;line-height:12px;font-weight:400;color:#333;letter-spacing:-0.2px;">Gast</div>
<div class="t" style="right:1106.40px;top:672.34px;font-size:12px;line-height:12px;font-weight:400;color:#333;letter-spacing:-0.45px;">41,80 EUR</div>
<div class="t" style="left:811.30px;top:672.34px;font-size:12px;line-height:12px;font-weight:400;color:#333;letter-spacing:-0.6px;">VK</div>
<div class="t" style="left:941.00px;top:672.34px;font-size:12px;line-height:12px;font-weight:400;color:#333;letter-spacing:-0.85px;">VERS</div>
<svg style="position:absolute;left:970.00px;top:669.20px;" width="22" height="18" viewBox="0 0 22 18"><path d="M8.4 2.9 H18.8 V12.4 H3.3 V7.2 Q3.3 5 5.4 5 H8.4 Z" fill="#222"/><path d="M4.6 8.3 V7.4 Q4.6 6.2 5.8 6.2 H7.9 V8.3 Z" fill="#fff"/><circle cx="7.3" cy="12.6" r="1.9" fill="#fff" stroke="#222" stroke-width="1.5"/><circle cx="15.5" cy="12.6" r="1.9" fill="#fff" stroke="#222" stroke-width="1.5"/></svg>
<svg style="position:absolute;left:1070.00px;top:672.70px;" width="16" height="11" viewBox="0 0 16 11"><rect x="0.5" y="0.5" width="15" height="10" fill="#e4e4e0" stroke="#3c3c34" stroke-width="1"/><rect x="2" y="2" width="12" height="2.3" fill="#74403c"/><rect x="2" y="4.3" width="12" height="2.5" fill="#e3483e"/><rect x="2" y="6.8" width="12" height="2.7" fill="#f3cc5c"/></svg>
<div class="t" style="left:1089.80px;top:672.34px;font-size:12px;line-height:12px;font-weight:400;color:#333;letter-spacing:-0.6px;">DE</div>
<div class="t" style="left:1159.00px;top:672.34px;font-size:12px;line-height:12px;font-weight:400;color:#333;">13.10.16 - 11:46</div>
<div class="t" style="left:1276px;top:669.70px;height:17.8px;box-sizing:border-box;padding:2.4px 8px 0 8px;line-height:15.3px;border-radius:3px;background:#45a646;color:#fff;font-size:12px;">Versendet</div>
<div class="t" style="right:440.30px;top:672.34px;font-size:12px;line-height:12px;font-weight:400;color:#333;">4.5</div>
<div style="position:absolute;left:222.00px;top:705.40px;width:1654.60px;height:55.12px;background:#f9f9f9;"></div>
<div style="position:absolute;left:246.00px;top:727.70px;width:14.00px;height:14.00px;box-sizing:border-box;border:1px solid #b9b9b9;border-radius:2px;background:#fff;"></div>
<div class="t" style="right:1536.00px;top:728.84px;font-size:12px;line-height:12px;font-weight:400;color:#333;">403529</div>
<div class="t" style="left:381.50px;top:728.84px;font-size:12px;line-height:12px;font-weight:400;color:#333;">Ines Schmitz</div>
<div class="t" style="left:605.30px;top:727.44px;font-size:12px;line-height:12px;font-weight:400;color:#333;letter-spacing:-0.2px;">Gast</div>
<div class="t" style="right:1106.40px;top:727.44px;font-size:12px;line-height:12px;font-weight:400;color:#333;letter-spacing:-0.45px;">89,85 EUR</div>
<div class="t" style="left:811.30px;top:727.44px;font-size:12px;line-height:12px;font-weight:400;color:#333;letter-spacing:-0.6px;">NN</div>
<div class="t" style="left:941.00px;top:727.44px;font-size:12px;line-height:12px;font-weight:400;color:#333;letter-spacing:-0.85px;">VERS</div>
<svg style="position:absolute;left:970.00px;top:724.30px;" width="22" height="18" viewBox="0 0 22 18"><path d="M8.4 2.9 H18.8 V12.4 H3.3 V7.2 Q3.3 5 5.4 5 H8.4 Z" fill="#222"/><path d="M4.6 8.3 V7.4 Q4.6 6.2 5.8 6.2 H7.9 V8.3 Z" fill="#fff"/><circle cx="7.3" cy="12.6" r="1.9" fill="#fff" stroke="#222" stroke-width="1.5"/><circle cx="15.5" cy="12.6" r="1.9" fill="#fff" stroke="#222" stroke-width="1.5"/></svg>
<svg style="position:absolute;left:1070.00px;top:727.80px;" width="16" height="11" viewBox="0 0 16 11"><rect x="0.5" y="0.5" width="15" height="10" fill="#e4e4e0" stroke="#3c3c34" stroke-width="1"/><rect x="2" y="2" width="12" height="2.3" fill="#74403c"/><rect x="2" y="4.3" width="12" height="2.5" fill="#e3483e"/><rect x="2" y="6.8" width="12" height="2.7" fill="#f3cc5c"/></svg>
<div class="t" style="left:1089.80px;top:727.44px;font-size:12px;line-height:12px;font-weight:400;color:#333;letter-spacing:-0.6px;">DE</div>
<div class="t" style="left:1159.00px;top:727.44px;font-size:12px;line-height:12px;font-weight:400;color:#333;">13.10.16 - 11:46</div>
<div class="t" style="left:1276px;top:724.90px;height:17.8px;box-sizing:border-box;padding:2.4px 8px 0 8px;line-height:15.3px;border-radius:3px;background:#45a646;color:#fff;font-size:12px;">Versendet</div>
<div class="t" style="right:440.30px;top:727.44px;font-size:12px;line-height:12px;font-weight:400;color:#333;">10.7</div>
<div style="position:absolute;left:222.00px;top:760.52px;width:1654.60px;height:55.12px;background:#fff;"></div>
<div style="position:absolute;left:246.00px;top:782.82px;width:14.00px;height:14.00px;box-sizing:border-box;border:1px solid #b9b9b9;border-radius:2px;background:#fff;"></div>
<div class="t" style="right:1536.00px;top:784.07px;font-size:12px;line-height:12px;font-weight:400;color:#333;">403528</div>
<div class="t" style="left:381.50px;top:784.07px;font-size:12px;line-height:12px;font-weight:400;color:#333;">Claudia Sommer</div>
<div class="t" style="left:605.30px;top:782.54px;font-size:12px;line-height:12px;font-weight:400;color:#333;letter-spacing:-0.2px;">Neuer Kunde</div>
<div class="t" style="right:1106.40px;top:782.54px;font-size:12px;line-height:12px;font-weight:400;color:#333;letter-spacing:-0.45px;">374,85 EUR</div>
<div class="t" style="left:811.30px;top:782.54px;font-size:12px;line-height:12px;font-weight:400;color:#333;letter-spacing:-0.6px;">PP</div>
<div class="t" style="left:941.00px;top:782.54px;font-size:12px;line-height:12px;font-weight:400;color:#333;letter-spacing:-0.85px;">VERS</div>
<svg style="position:absolute;left:1070.00px;top:782.90px;" width="16" height="11" viewBox="0 0 16 11"><rect x="0.5" y="0.5" width="15" height="10" fill="#e4e4e0" stroke="#3c3c34" stroke-width="1"/><rect x="2" y="2" width="12" height="2.3" fill="#74403c"/><rect x="2" y="4.3" width="12" height="2.5" fill="#e3483e"/><rect x="2" y="6.8" width="12" height="2.7" fill="#f3cc5c"/></svg>
<div class="t" style="left:1089.80px;top:782.54px;font-size:12px;line-height:12px;font-weight:400;color:#333;letter-spacing:-0.6px;">DE</div>
<div class="t" style="left:1159.00px;top:782.54px;font-size:12px;line-height:12px;font-weight:400;color:#333;">13.10.16 - 11:46</div>
<div class="t" style="left:1276px;top:780.10px;height:17.8px;box-sizing:border-box;padding:2.4px 8px 0 8px;line-height:15.3px;border-radius:3px;background:#1a80dc;color:#fff;font-size:12px;">In Bearbeitung</div>
<div class="t" style="right:440.30px;top:782.54px;font-size:12px;line-height:12px;font-weight:400;color:#333;">16.4</div>
<div style="position:absolute;left:222.00px;top:815.65px;width:1654.60px;height:55.12px;background:#f9f9f9;"></div>
<div style="position:absolute;left:246.00px;top:837.95px;width:14.00px;height:14.00px;box-sizing:border-box;border:1px solid #b9b9b9;border-radius:2px;background:#fff;"></div>
<div class="t" style="right:1536.00px;top:839.29px;font-size:12px;line-height:12px;font-weight:400;color:#333;">403527</div>
<div class="t" style="left:381.50px;top:839.29px;font-size:12px;line-height:12px;font-weight:400;color:#333;">Kristian Hertz</div>
<div class="t" style="left:605.30px;top:837.64px;font-size:12px;line-height:12px;font-weight:400;color:#333;letter-spacing:-0.2px;">Gast</div>
<div class="t" style="right:1106.40px;top:837.64px;font-size:12px;line-height:12px;font-weight:400;color:#333;letter-spacing:-0.45px;">41,85 EUR</div>
<div class="t" style="left:811.30px;top:837.64px;font-size:12px;line-height:12px;font-weight:400;color:#333;letter-spacing:-0.6px;">VK</div>
<div class="t" style="left:941.00px;top:837.64px;font-size:12px;line-height:12px;font-weight:400;color:#333;letter-spacing:-0.85px;">ABH</div>
<svg style="position:absolute;left:1070.00px;top:838.00px;" width="16" height="11" viewBox="0 0 16 11"><rect x="0.5" y="0.5" width="15" height="10" fill="#e4e4e0" stroke="#3c3c34" stroke-width="1"/><rect x="2" y="2" width="12" height="2.3" fill="#74403c"/><rect x="2" y="4.3" width="12" height="2.5" fill="#e3483e"/><rect x="2" y="6.8" width="12" height="2.7" fill="#f3cc5c"/></svg>
<div class="t" style="left:1089.80px;top:837.64px;font-size:12px;line-height:12px;font-weight:400;color:#333;letter-spacing:-0.6px;">DE</div>
<div class="t" style="left:1159.00px;top:837.64px;font-size:12px;line-height:12px;font-weight:400;color:#333;">13.10.16 - 11:46</div>
<div class="t" style="left:1276px;top:835.30px;height:17.8px;box-sizing:border-box;padding:2.4px 8px 0 8px;line-height:15.3px;border-radius:3px;background:#f7a942;color:#3a2a12;font-size:12px;">Offen</div>
<div class="t" style="right:440.30px;top:837.64px;font-size:12px;line-height:12px;font-weight:400;color:#333;">3.7</div>
<svg style="position:absolute;left:1477.00px;top:668.60px;" width="16" height="16" viewBox="0 0 16 16"><circle cx="8" cy="8" r="7.9" fill="#cf0808"/><path d="M4 4.6 L5.8 11.8 L8 6.4 L10.2 11.8 L12 4.6" fill="none" stroke="#fff" stroke-width="1.9" stroke-linejoin="miter" stroke-miterlimit="3"/></svg>
<svg style="position:absolute;left:266.10px;top:290.40px;" width="7" height="3.6" viewBox="0 0 7 3.6"><path d="M0 0 H7 L3.5 3.6 Z" fill="#777"/></svg>
<svg style="position:absolute;left:1603.50px;top:284.50px;" width="25" height="17" viewBox="0 0 25 17"><path d="M1.3 8.6 C5.5 0.6 19.5 0.6 23.7 8.6 C19.5 16.2 5.5 16.2 1.3 8.6 Z" fill="none" stroke="#707070" stroke-width="1.9"/><circle cx="12.6" cy="7.1" r="5.4" fill="#707070"/><path d="M9.6 7.4 A3.2 3.2 0 0 1 12.4 3.9" fill="none" stroke="#eee" stroke-width="1"/></svg>
<svg style="position:absolute;left:1654.80px;top:282.00px;" width="20" height="21" viewBox="0 0 20 21"><path d="M1 4.2 H19" stroke="#777" stroke-width="1.9"/><path d="M6.8 4 V1.6 Q6.8 0.8 7.6 0.8 H12.4 Q13.2 0.8 13.2 1.6 V4" fill="none" stroke="#777" stroke-width="1.6"/><path d="M3.2 4.6 V18.4 Q3.2 20 4.8 20 H15.2 Q16.8 20 16.8 18.4 V4.6" fill="none" stroke="#777" stroke-width="1.9"/><path d="M7 7.6 V16.6 M10 7.6 V16.6 M13 7.6 V16.6" stroke="#777" stroke-width="1.7"/></svg>
<div style="position:absolute;left:1701.40px;top:276.20px;width:151.20px;height:31.00px;box-sizing:border-box;border:1px solid #d6d6d6;border-radius:2px;background:linear-gradient(#f6f6f6,#ebebeb);box-shadow:0 1px 1px rgba(0,0,0,.05);"></div>
<div style="position:absolute;left:1820.20px;top:277.00px;width:1.00px;height:29.40px;background:#d6d6d6;"></div>
<div class="t" style="left:1714.00px;top:286.64px;font-size:12px;line-height:12px;font-weight:400;color:#6a6a6a;">Sendungsnum...</div>
<svg style="position:absolute;left:1832.50px;top:290.20px;" width="8" height="4" viewBox="0 0 8 4"><path d="M0 0 H8 L4.0 4 Z" fill="#666"/></svg>
<div style="position:absolute;left:266.00px;top:301.00px;width:238.50px;height:210.00px;box-sizing:border-box;border:1px solid #d2d2d2;border-radius:1px;background:#fff;box-shadow:0 2px 4px rgba(0,0,0,.10);"></div>
<div class="t" style="left:287.00px;top:308.74px;font-size:12px;line-height:12px;font-weight:400;color:#6a6a6a;">Status ändern</div>
<div class="t" style="left:287.00px;top:331.89px;font-size:12px;line-height:12px;font-weight:400;color:#6a6a6a;">Löschen</div>
<div class="t" style="left:287.00px;top:355.04px;font-size:12px;line-height:12px;font-weight:400;color:#6a6a6a;">Stornieren</div>
<div class="t" style="left:287.00px;top:378.19px;font-size:12px;line-height:12px;font-weight:400;color:#6a6a6a;">E-Mail-Bestellbestätigung senden</div>
<div class="t" style="left:287.00px;top:401.34px;font-size:12px;line-height:12px;font-weight:400;color:#6a6a6a;">E-Mail-Rechnung senden</div>
<div class="t" style="left:287.00px;top:424.49px;font-size:12px;line-height:12px;font-weight:400;color:#6a6a6a;">Rechnung</div>
<div class="t" style="left:287.00px;top:447.64px;font-size:12px;line-height:12px;font-weight:400;color:#6a6a6a;">Lieferschein</div>
<div class="t" style="left:287.00px;top:470.79px;font-size:12px;line-height:12px;font-weight:400;color:#6a6a6a;">MyDPD/Iloxx-Versandlabel anfordern</div>
<div class="t" style="left:287.00px;top:493.94px;font-size:12px;line-height:12px;font-weight:400;color:#6a6a6a;">Shipcloud Versandlabel</div>
<svg style="position:absolute;left:270.00px;top:155.00px;" width="100" height="135" viewBox="270 155 100 135"><defs><filter id="sh" x="-20%" y="-20%" width="140%" height="140%"><feDropShadow dx="1" dy="1.5" stdDeviation="1.2" flood-color="#000" flood-opacity="0.28"/></filter></defs><path d="M351.2 166.5 Q354.5 162.8 357.4 166.8 L304.5 257.6 L312.4 261.6 L282.8 277.3 L284.4 244.1 L292.8 252.6 Z" fill="#f0195b" filter="url(#sh)"/></svg>
</body></html>
